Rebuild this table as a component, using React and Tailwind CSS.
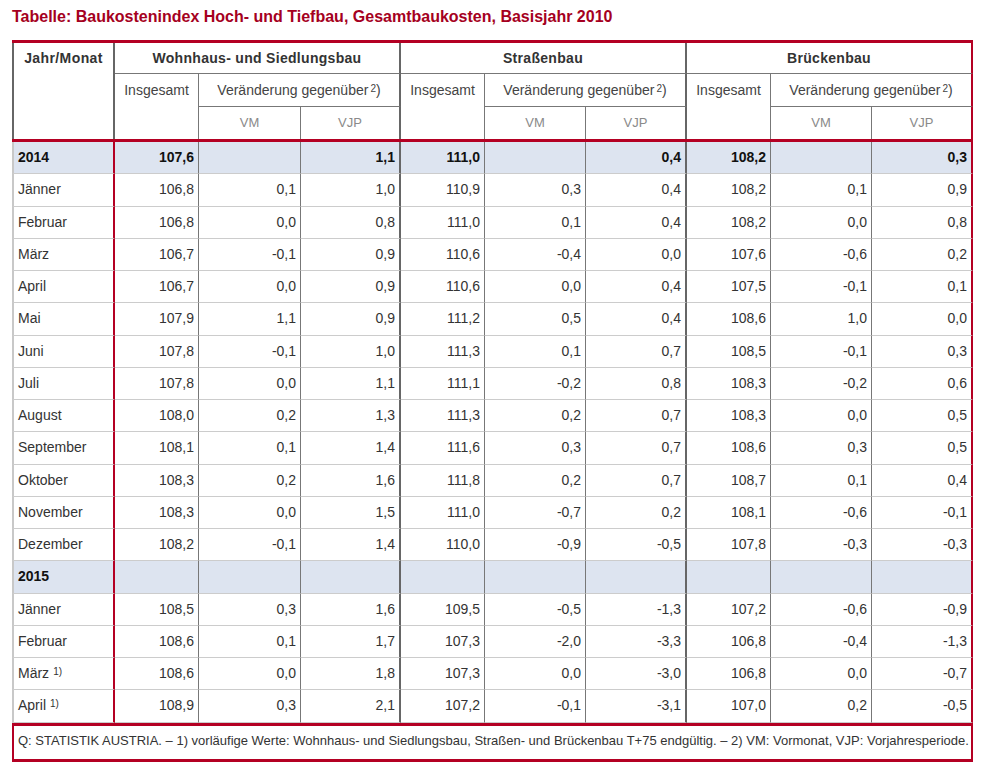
import React from 'react';

// Baukostenindex table, 2014/2015, three groups of columns
const RED = 'border-[#b40023]';

const rows = [
    { label: '2014', year: true, v: ['107,6', '', '1,1', '111,0', '', '0,4', '108,2', '', '0,3'] },
    { label: 'Jänner', v: ['106,8', '0,1', '1,0', '110,9', '0,3', '0,4', '108,2', '0,1', '0,9'] },
    { label: 'Februar', v: ['106,8', '0,0', '0,8', '111,0', '0,1', '0,4', '108,2', '0,0', '0,8'] },
    { label: 'März', v: ['106,7', '-0,1', '0,9', '110,6', '-0,4', '0,0', '107,6', '-0,6', '0,2'] },
    { label: 'April', v: ['106,7', '0,0', '0,9', '110,6', '0,0', '0,4', '107,5', '-0,1', '0,1'] },
    { label: 'Mai', v: ['107,9', '1,1', '0,9', '111,2', '0,5', '0,4', '108,6', '1,0', '0,0'] },
    { label: 'Juni', v: ['107,8', '-0,1', '1,0', '111,3', '0,1', '0,7', '108,5', '-0,1', '0,3'] },
    { label: 'Juli', v: ['107,8', '0,0', '1,1', '111,1', '-0,2', '0,8', '108,3', '-0,2', '0,6'] },
    { label: 'August', v: ['108,0', '0,2', '1,3', '111,3', '0,2', '0,7', '108,3', '0,0', '0,5'] },
    { label: 'September', v: ['108,1', '0,1', '1,4', '111,6', '0,3', '0,7', '108,6', '0,3', '0,5'] },
    { label: 'Oktober', v: ['108,3', '0,2', '1,6', '111,8', '0,2', '0,7', '108,7', '0,1', '0,4'] },
    { label: 'November', v: ['108,3', '0,0', '1,5', '111,0', '-0,7', '0,2', '108,1', '-0,6', '-0,1'] },
    { label: 'Dezember', v: ['108,2', '-0,1', '1,4', '110,0', '-0,9', '-0,5', '107,8', '-0,3', '-0,3'] },
    { label: '2015', year: true, v: ['', '', '', '', '', '', '', '', ''] },
    { label: 'Jänner', v: ['108,5', '0,3', '1,6', '109,5', '-0,5', '-1,3', '107,2', '-0,6', '-0,9'] },
    { label: 'Februar', v: ['108,6', '0,1', '1,7', '107,3', '-2,0', '-3,3', '106,8', '-0,4', '-1,3'] },
    { label: 'März', note: true, v: ['108,6', '0,0', '1,8', '107,3', '0,0', '-3,0', '106,8', '0,0', '-0,7'] },
    { label: 'April', note: true, v: ['108,9', '0,3', '2,1', '107,2', '-0,1', '-3,1', '107,0', '0,2', '-0,5'] },
];

const bodyBorder = [
    'border-l-2 border-l-[#c8c8c8] border-r-2 border-r-[#b40023]',
    'border-r border-r-[#777]',
    'border-r border-r-[#777]',
    'border-r-2 border-r-[#666]',
    'border-r border-r-[#777]',
    'border-r border-r-[#777]',
    'border-r-2 border-r-[#666]',
    'border-r border-r-[#777]',
    'border-r border-r-[#777]',
    'border-r-2 border-r-[#b40023]',
];

const cols = 'grid grid-cols-[103px_84px_102px_100px_84px_101px_101px_84px_101px_101px]';

const GroupHeader = ({ title, last }) => (
    <div
        className={`col-span-3 flex items-center justify-center border-b border-b-[#777] border-r-2 ${
            last ? 'border-r-[#b40023]' : 'border-r-[#666]'
        } text-[14px] font-bold tracking-[0.3px] text-[#333]`}
    >
        {title}
    </div>
);

const SubHeader = ({ last }) => (
    <>
        <div className="row-span-2 border-r border-r-[#777] pt-[8px] text-center text-[14px] leading-[16px] text-[#444]">
            Insgesamt
        </div>
        <div
            className={`col-span-2 flex items-center justify-center border-b border-b-[#777] border-r-2 ${
                last ? 'border-r-[#b40023]' : 'border-r-[#666]'
            } text-[14px] text-[#444]`}
        >
            Veränderung gegenüber
            <sup className="ml-[2px] text-[10px] relative top-[-1px]">2</sup>)
        </div>
    </>
);

const Header = () => (
    <div className={`${cols} grid-rows-[31px_33px_32px] border-t-[3px] border-b-[3px] ${RED}`}>
        <div className="row-span-3 border-l-2 border-l-[#666] border-r-2 border-r-[#666] pt-[7px] text-center text-[14px] leading-[16px] font-bold tracking-[0.4px] text-[#333]">
            Jahr/Monat
        </div>
        <GroupHeader title="Wohnhaus- und Siedlungsbau" />
        <GroupHeader title="Straßenbau" />
        <GroupHeader title="Brückenbau" last />
        <SubHeader />
        <SubHeader />
        <SubHeader last />
        {[0, 1, 2].map((g) => (
            <React.Fragment key={g}>
                <div className="flex items-center justify-center border-r border-r-[#777] text-[13px] text-[#8a8a8a]">
                    VM
                </div>
                <div
                    className={`flex items-center justify-center border-r-2 ${
                        g === 2 ? 'border-r-[#b40023]' : 'border-r-[#666]'
                    } text-[13px] text-[#8a8a8a]`}
                >
                    VJP
                </div>
            </React.Fragment>
        ))}
    </div>
);

const Body = () => (
    <div className={`${cols} auto-rows-[32.25px]`}>
        {rows.map((r, i) => (
            <React.Fragment key={i}>
                <div
                    className={`flex items-center border-b border-b-[#ccc] pl-[4px] text-[14px] ${bodyBorder[0]} ${
                        r.year ? 'bg-[#dde4f0] font-bold text-[#111]' : 'text-[#333]'
                    }`}
                >
                    {r.label}
                    {r.note && <sup className="ml-[4px] text-[10px] relative top-[-2px]">1)</sup>}
                </div>
                {r.v.map((val, j) => (
                    <div
                        key={j}
                        className={`flex items-center justify-end border-b border-b-[#ccc] pr-[4px] text-[14px] ${
                            bodyBorder[j + 1]
                        } ${r.year ? 'bg-[#dde4f0] font-bold text-[#111]' : 'text-[#333]'}`}
                    >
                        {val}
                    </div>
                ))}
            </React.Fragment>
        ))}
    </div>
);

export default function App() {
    return (
        <div className="w-[986px] h-[776px] bg-white font-['Liberation_Sans',Arial,sans-serif]">
            <div className="h-[40px] pl-[12px] pt-[8px] text-[16px] leading-[18px] font-bold text-[#a50021]">
                Tabelle: Baukostenindex Hoch- und Tiefbau, Gesamtbaukosten, Basisjahr 2010
            </div>
            <div className="ml-[12px] w-[961px]">
                <Header />
                <Body />
                <div className={`h-[39px] border-x-2 border-y-[3px] ${RED} pl-[4px] pt-[7px] whitespace-nowrap text-[13px] leading-[16px] text-[#333]`}>
                    Q: STATISTIK AUSTRIA. – 1) vorläufige Werte: Wohnhaus- und Siedlungsbau, Straßen- und Brückenbau T+75 endgültig. – 2) VM: Vormonat, VJP: Vorjahresperiode.
                </div>
            </div>
        </div>
    );
}
